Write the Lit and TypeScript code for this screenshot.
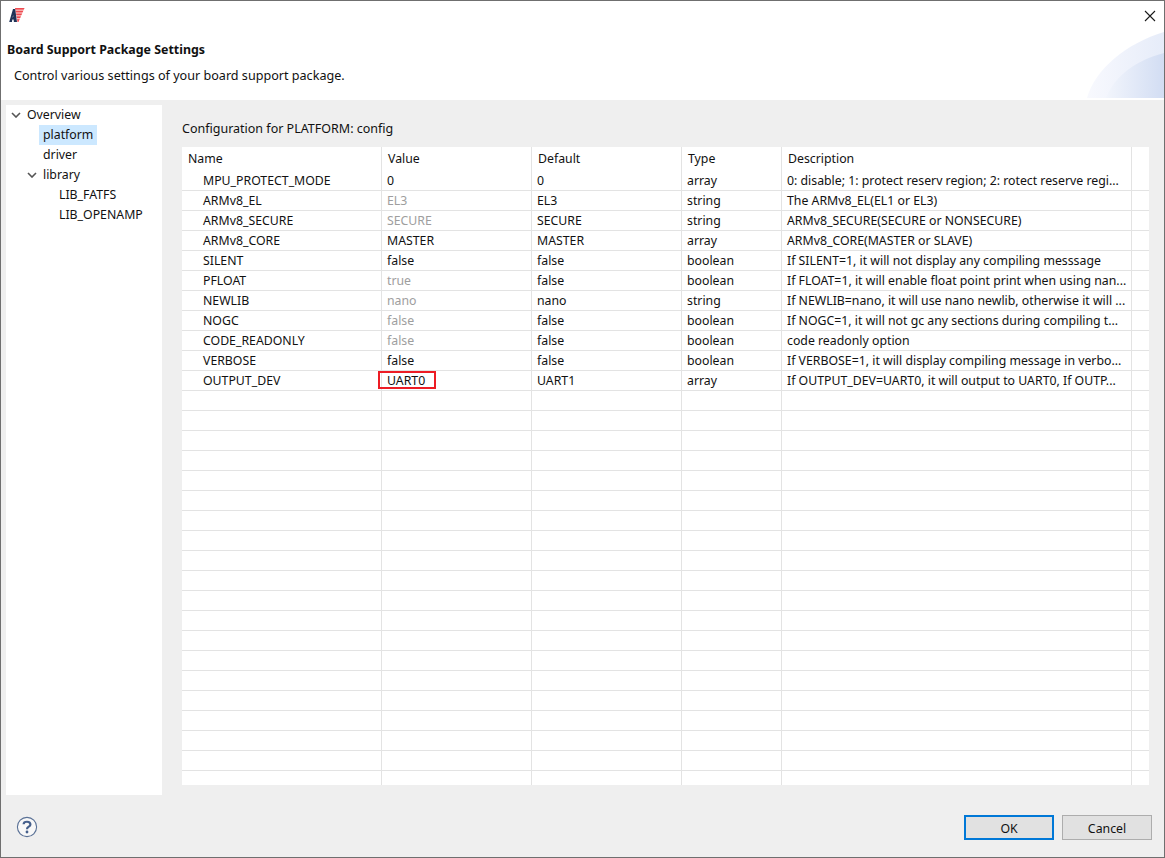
import { css, html, LitElement, svg } from "lit";
import { customElement } from "lit/decorators.js";

type Row = { name: string; value: string; def: string; type: string; desc: string; muted?: boolean; marked?: boolean };

const ROWS: Row[] = [
  { name: "MPU_PROTECT_MODE", value: "0", def: "0", type: "array", desc: "0: disable; 1: protect reserv region; 2: rotect reserve regi..." },
  { name: "ARMv8_EL", value: "EL3", def: "EL3", type: "string", desc: "The ARMv8_EL(EL1 or EL3)", muted: true },
  { name: "ARMv8_SECURE", value: "SECURE", def: "SECURE", type: "string", desc: "ARMv8_SECURE(SECURE or NONSECURE)", muted: true },
  { name: "ARMv8_CORE", value: "MASTER", def: "MASTER", type: "array", desc: "ARMv8_CORE(MASTER or SLAVE)" },
  { name: "SILENT", value: "false", def: "false", type: "boolean", desc: "If SILENT=1, it will not display any compiling messsage" },
  { name: "PFLOAT", value: "true", def: "false", type: "boolean", desc: "If FLOAT=1, it will enable float point print when using nan...", muted: true },
  { name: "NEWLIB", value: "nano", def: "nano", type: "string", desc: "If NEWLIB=nano, it will use nano newlib, otherwise it will ...", muted: true },
  { name: "NOGC", value: "false", def: "false", type: "boolean", desc: "If NOGC=1, it will not gc any sections during compiling t...", muted: true },
  { name: "CODE_READONLY", value: "false", def: "false", type: "boolean", desc: "code readonly option", muted: true },
  { name: "VERBOSE", value: "false", def: "false", type: "boolean", desc: "If VERBOSE=1, it will display compiling message in verbo..." },
  { name: "OUTPUT_DEV", value: "UART0", def: "UART1", type: "array", desc: "If OUTPUT_DEV=UART0, it will output to UART0, If OUTP...", marked: true },
];

const chevron = svg`<path d="M1 1 L5 5 L9 1" fill="none" stroke="#555" stroke-width="1.6" />`;

@customElement("app-root")
export class AppRoot extends LitElement {
  static styles = css`
    :host {
      display: flex;
      flex-direction: column;
      box-sizing: border-box;
      width: 1165px;
      height: 858px;
      border: 1px solid #6f6f6f;
      background: #efefef;
      font-family: "Noto Sans", "Open Sans", sans-serif;
      font-size: 12.3px;
      color: #111;
      overflow: hidden;
    }
    .head {
      position: relative;
      height: 99px;
      flex: none;
      background: #fff;
      padding-left: 6px;
    }
    .logo {
      display: block;
      margin: 7px 0 0 2px;
      width: 16px;
      height: 15px;
    }
    .title {
      margin-top: 18px;
      font-size: 12.4px;
      font-weight: 700;
      line-height: 18px;
    }
    .sub {
      margin: 8px 0 0 7px;
      font-size: 12.6px;
      line-height: 18px;
    }
    .banner {
      position: absolute;
      right: 0;
      top: 30px;
    }
    .close {
      position: absolute;
      left: 1143px;
      top: 9px;
    }
    .main {
      display: flex;
      gap: 20px;
      padding: 5px 15px 0 5px;
    }
    .tree {
      width: 156px;
      height: 690px;
      background: #fff;
    }
    .node {
      display: flex;
      align-items: center;
      height: 20px;
      line-height: 20px;
    }
    .node svg {
      width: 10px;
      height: 6px;
      flex: none;
      margin-right: 6px;
    }
    .n0 { padding-left: 5px; }
    .n1 { padding-left: 37px; }
    .n1c { padding-left: 21px; }
    .n2 { padding-left: 53px; }
    .sel {
      background: #cce8ff;
      padding: 0 4px;
      margin-left: -4px;
      height: 20px;
    }
    .panel {
      flex: 1;
      min-width: 0;
    }
    .cap {
      height: 42px;
      padding-top: 15px;
      box-sizing: border-box;
      font-size: 12.5px;
      line-height: 18px;
    }
    .table {
      height: 638px;
      background: #fff;
      overflow: hidden;
    }
    .row {
      display: grid;
      grid-template-columns: 200px 150px 150px 100px 350px 1fr;
      box-sizing: border-box;
      height: 20px;
      border-bottom: 1px solid #e3e3e3;
    }
    .row.th {
      height: 24px;
      border-bottom: 0;
    }
    .row > div {
      position: relative;
      box-sizing: border-box;
      border-right: 1px solid #e3e3e3;
      padding-left: 5px;
      line-height: 19px;
      white-space: nowrap;
      overflow: hidden;
    }
    .row.th > div {
      padding-left: 6px;
      line-height: 23px;
    }
    .row > div:last-child {
      border-right: 0;
    }
    .row > div.name {
      padding-left: 21px;
    }
    .row > div.marked {
      overflow: visible;
    }
    .muted {
      color: #9e9e9e;
    }
    .mark {
      position: absolute;
      left: -4px;
      top: 0;
      width: 58px;
      height: 18px;
      box-sizing: border-box;
      border: 2px solid #ed1c24;
    }
    .foot {
      display: flex;
      align-items: flex-start;
      justify-content: space-between;
      padding: 20px 12px 0 15px;
    }
    .help {
      display: block;
      width: 22px;
      height: 22px;
      margin-top: 1px;
    }
    .btns {
      display: flex;
      gap: 8px;
    }
    button {
      width: 90px;
      height: 25px;
      padding: 2px 0 0;
      box-sizing: border-box;
      border: 1px solid #adadad;
      background: #e1e1e1;
      font: inherit;
      color: inherit;
    }
    button.def {
      border: 2px solid #0078d7;
    }
  `;

  render() {
    const empty: Row = { name: "", value: "", def: "", type: "", desc: "" };
    const rows = [...ROWS, ...Array.from({ length: 20 }, () => empty)];
    return html`
      <div class="head">
        <svg class="logo" viewBox="0 0 16 15">
          <defs>
            <clipPath id="stripes"><path d="M6 0 H15.5 L9.4 14 H8.6 Z" /></clipPath>
          </defs>
          <path d="M6 0 H15.5 L9.4 14 H8.6 Z" fill="#fbc3c3" />
          <g clip-path="url(#stripes)" fill="#ee4a50">
            <rect x="5" y="0" width="11" height="1.6" />
            <rect x="5" y="2.8" width="11" height="1.6" />
            <rect x="5" y="5.6" width="11" height="1.6" />
            <rect x="5" y="8.4" width="11" height="1.6" />
            <rect x="5" y="11.2" width="11" height="2.8" />
          </g>
          <path d="M4 1 H6.2 L8 14 H4.9 L4.6 11.6 H3 L4.1 8.8 H4.3 L4.1 7 L2.9 14 H0.2 Z" fill="#1f3357" />
        </svg>
        <div class="title">Board Support Package Settings</div>
        <div class="sub">Control various settings of your board support package.</div>
        <svg class="banner" width="77" height="67" viewBox="0 0 77 67">
          <defs>
            <linearGradient id="g1" x1="0" x2="1" y1="0" y2="0">
              <stop offset="0" stop-color="#f8f9fe" />
              <stop offset="1" stop-color="#e6ecf9" />
            </linearGradient>
            <linearGradient id="g2" x1="0" x2="1" y1="0" y2="0">
              <stop offset="0" stop-color="#f2f5fc" />
              <stop offset="1" stop-color="#d2ddf3" />
            </linearGradient>
          </defs>
          <path d="M0 67 C8 38 40 12 77 1 V67 Z" fill="url(#g1)" />
          <path d="M19 67 C28 44 50 29 77 22 V67 Z" fill="url(#g2)" />
        </svg>
        <svg class="close" width="12" height="12" viewBox="0 0 12 12">
          <path d="M1 1 L11 11 M11 1 L1 11" stroke="#1a1a1a" stroke-width="1.1" />
        </svg>
      </div>
      <div class="main">
        <div class="tree">
          <div class="node n0"><svg viewBox="0 0 10 6">${chevron}</svg>Overview</div>
          <div class="node n1"><span class="sel">platform</span></div>
          <div class="node n1">driver</div>
          <div class="node n1c"><svg viewBox="0 0 10 6">${chevron}</svg>library</div>
          <div class="node n2">LIB_FATFS</div>
          <div class="node n2">LIB_OPENAMP</div>
        </div>
        <div class="panel">
          <div class="cap">Configuration for PLATFORM: config</div>
          <div class="table">
            <div class="row th">
              <div>Name</div><div>Value</div><div>Default</div><div>Type</div><div>Description</div><div></div>
            </div>
            ${rows.map(
              (r) => html`
                <div class="row">
                  <div class="name">${r.name}</div>
                  <div class="${r.muted ? "muted" : ""} ${r.marked ? "marked" : ""}">
                    ${r.value}${r.marked ? html`<span class="mark"></span>` : ""}
                  </div>
                  <div>${r.def}</div>
                  <div>${r.type}</div>
                  <div>${r.desc}</div>
                  <div></div>
                </div>
              `
            )}
          </div>
        </div>
      </div>
      <div class="foot">
        <svg class="help" viewBox="0 0 22 22">
          <circle cx="11" cy="11" r="9.6" fill="#f8f8f8" stroke="#5a7196" stroke-width="1.1" />
          <path d="M7.6 8.2 C7.8 4.9 14.4 4.9 14.4 8.4 C14.4 10.8 11 10.6 11 13.2" fill="none" stroke="#46608c" stroke-width="2.2" />
          <circle cx="11" cy="16" r="1.4" fill="#46608c" />
        </svg>
        <div class="btns">
          <button class="def">OK</button>
          <button>Cancel</button>
        </div>
      </div>
    `;
  }
}
